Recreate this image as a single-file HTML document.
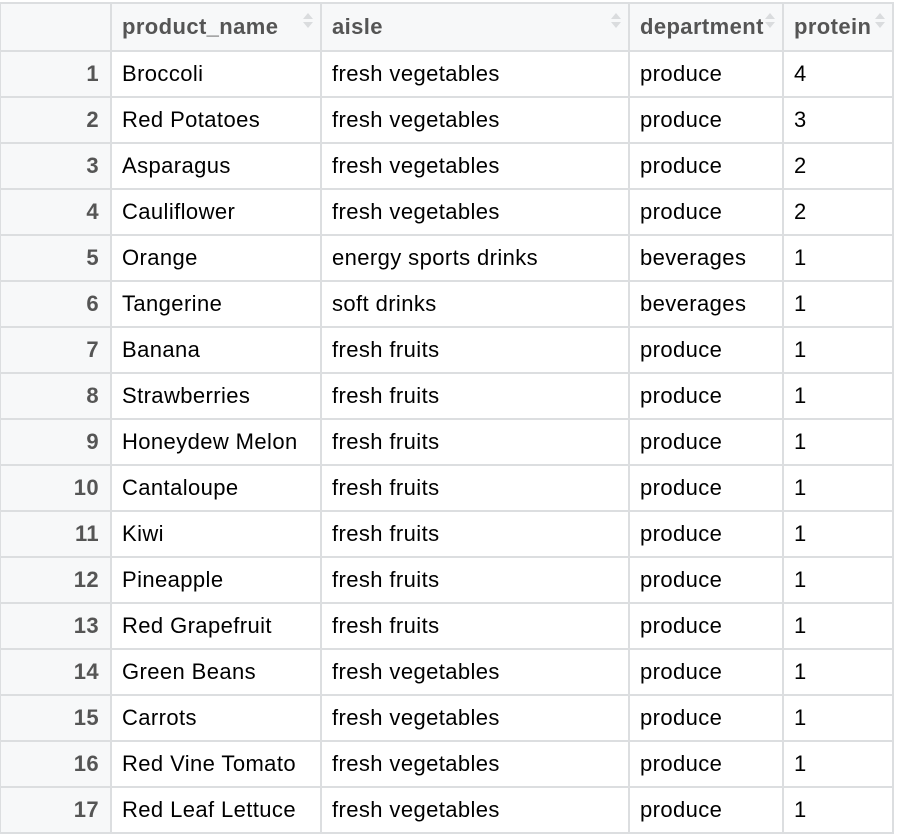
<!DOCTYPE html>
<html><head><style>
body{margin:0;background:#fff;width:898px;height:836px;overflow:hidden;font-family:"Liberation Sans",sans-serif}
table{position:absolute;left:-1px;top:2px;border-collapse:collapse;table-layout:fixed}
td,th{border:2px solid #dcdee0;height:44px;padding:0 0 0 10px;font-size:22px;letter-spacing:0.4px;white-space:nowrap;overflow:hidden;text-align:left;color:#000;position:relative}
th{background:#f7f8f9;color:#555;font-weight:bold;height:46px;padding-top:0}
td.i{background:#f7f8f9;color:#555;font-weight:bold;text-align:right;padding:0 11px 0 0}
.s{position:absolute;right:8px;top:9px;width:10px;height:16px}
.s:before{content:"";position:absolute;left:1px;top:0;border:5px solid transparent;border-bottom:6px solid #dadcde;border-top:0}
.s:after{content:"";position:absolute;left:1px;top:9px;border:5px solid transparent;border-top:6px solid #dadcde;border-bottom:0}
</style></head><body>
<table>
<colgroup><col style="width:111px"><col style="width:210px"><col style="width:308px"><col style="width:154px"><col style="width:110px"></colgroup>
<tr><th></th><th>product_name<span class="s"></span></th><th>aisle<span class="s"></span></th><th>department<span class="s"></span></th><th>protein<span class="s"></span></th></tr>
<tr><td class="i">1</td><td>Broccoli</td><td>fresh vegetables</td><td>produce</td><td>4</td></tr>
<tr><td class="i">2</td><td>Red Potatoes</td><td>fresh vegetables</td><td>produce</td><td>3</td></tr>
<tr><td class="i">3</td><td>Asparagus</td><td>fresh vegetables</td><td>produce</td><td>2</td></tr>
<tr><td class="i">4</td><td>Cauliflower</td><td>fresh vegetables</td><td>produce</td><td>2</td></tr>
<tr><td class="i">5</td><td>Orange</td><td>energy sports drinks</td><td>beverages</td><td>1</td></tr>
<tr><td class="i">6</td><td>Tangerine</td><td>soft drinks</td><td>beverages</td><td>1</td></tr>
<tr><td class="i">7</td><td>Banana</td><td>fresh fruits</td><td>produce</td><td>1</td></tr>
<tr><td class="i">8</td><td>Strawberries</td><td>fresh fruits</td><td>produce</td><td>1</td></tr>
<tr><td class="i">9</td><td>Honeydew Melon</td><td>fresh fruits</td><td>produce</td><td>1</td></tr>
<tr><td class="i">10</td><td>Cantaloupe</td><td>fresh fruits</td><td>produce</td><td>1</td></tr>
<tr><td class="i">11</td><td>Kiwi</td><td>fresh fruits</td><td>produce</td><td>1</td></tr>
<tr><td class="i">12</td><td>Pineapple</td><td>fresh fruits</td><td>produce</td><td>1</td></tr>
<tr><td class="i">13</td><td>Red Grapefruit</td><td>fresh fruits</td><td>produce</td><td>1</td></tr>
<tr><td class="i">14</td><td>Green Beans</td><td>fresh vegetables</td><td>produce</td><td>1</td></tr>
<tr><td class="i">15</td><td>Carrots</td><td>fresh vegetables</td><td>produce</td><td>1</td></tr>
<tr><td class="i">16</td><td>Red Vine Tomato</td><td>fresh vegetables</td><td>produce</td><td>1</td></tr>
<tr><td class="i">17</td><td>Red Leaf Lettuce</td><td>fresh vegetables</td><td>produce</td><td>1</td></tr>
</table>
</body></html>
